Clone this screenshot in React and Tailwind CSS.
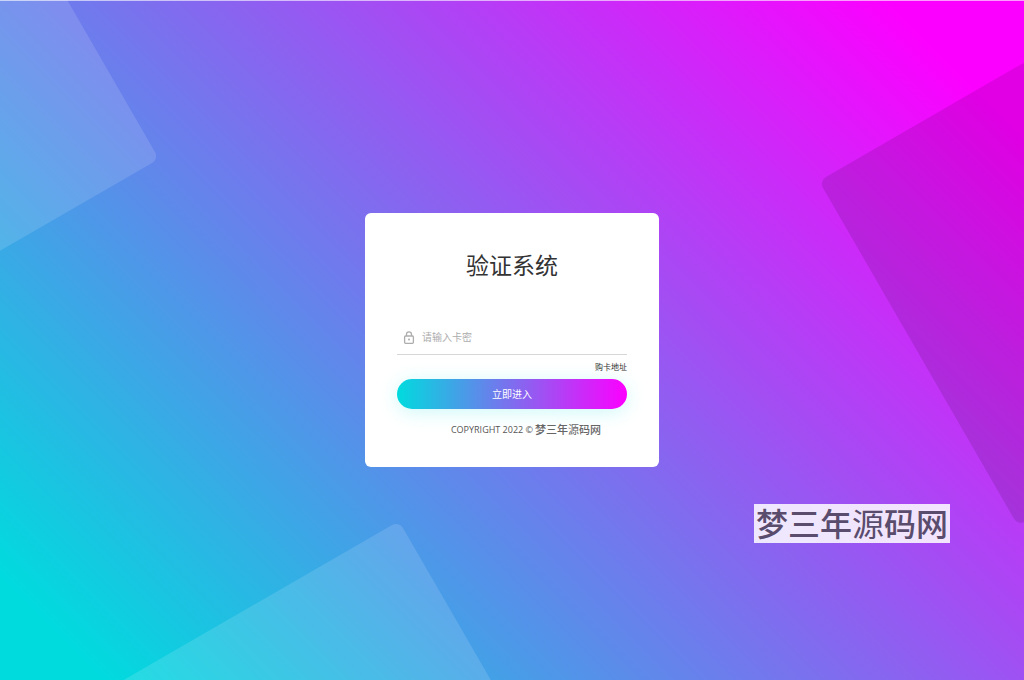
import { useState } from 'react'

function LockIcon() {
  return (
    <svg
      viewBox="0 0 12 14"
      className="w-3 h-[14px] shrink-0"
      fill="none"
      stroke="currentColor"
      strokeWidth="1.3"
      aria-hidden="true"
    >
      <rect x="1.6" y="5" width="8.8" height="7.3" rx="1" />
      <path d="M3.5 5V3.4a2.5 2.5 0 0 1 5 0V5" />
      <circle cx="6" cy="8.6" r="1" fill="currentColor" stroke="none" />
    </svg>
  )
}

// Tilted translucent squares behind the card
function Backdrop() {
  return (
    <svg
      viewBox="0 0 1024 680"
      preserveAspectRatio="xMidYMid slice"
      className="absolute inset-0 w-full h-full"
      aria-hidden="true"
    >
      <rect x="-400" y="-400" width="400" height="400" rx="8" fill="#fff" fillOpacity="0.13" transform="translate(159 159) rotate(-30)" />
      <rect width="400" height="398" rx="8" fill="#000" fillOpacity="0.11" transform="translate(819 181) rotate(-30)" />
      <rect x="-400" width="400" height="400" rx="8" fill="#fff" fillOpacity="0.13" transform="translate(399 521) rotate(-30)" />
    </svg>
  )
}

function SiteName() {
  return (
    <>
      梦三年<span className="font-normal">源</span>码网
    </>
  )
}

export default function App() {
  const [code, setCode] = useState('')

  return (
    <main className="relative min-h-screen overflow-hidden flex items-center justify-center bg-[linear-gradient(45deg,#00dbde_6%,#fc00ff_92%)] font-['Open_Sans','Noto_Sans_CJK_SC',sans-serif]">
      <Backdrop />
      <div className="absolute inset-x-0 top-0 h-px bg-white/60" />

      <form
        onSubmit={e => e.preventDefault()}
        className="relative w-full max-w-[294px] flex flex-col px-8 pt-9 pb-7 bg-white rounded-md"
      >
        <h1 className="mb-10 text-[23px] leading-8 text-center text-[#333333]">验证系统</h1>

        <label className="flex items-center gap-[7px] h-[34px] pl-1.5 border-b border-[#d5d8d5] text-[#adadad]">
          <LockIcon />
          <input
            type="text"
            value={code}
            onChange={e => setCode(e.target.value)}
            placeholder="请输入卡密"
            aria-label="请输入卡密"
            className="flex-1 min-w-0 text-[10px] text-[#333333] placeholder:text-[#adadad] outline-none"
          />
        </label>

        <a href="#" className="self-end my-1 text-[8px] leading-4 text-[#333333]">购卡地址</a>

        <button
          type="submit"
          className="h-[30px] rounded-full bg-[linear-gradient(90deg,#00dbde,#fc00ff)] shadow-[0_3px_20px_rgba(0,219,222,0.2)] text-[10px] text-white"
        >
          立即进入
        </button>

        <p className="mt-3 pl-7 flex items-center justify-center gap-0.5 text-[9px] leading-[18px] text-[#555555]">
          COPYRIGHT 2022 ©
          <span className="text-[11px] font-medium text-[#666666]"><SiteName /></span>
        </p>
      </form>

      <div className="absolute right-[74px] bottom-[137px] px-0.5 bg-white/85 text-[32px] leading-[39px] font-medium text-[#5a4c6c]">
        <SiteName />
      </div>
    </main>
  )
}
